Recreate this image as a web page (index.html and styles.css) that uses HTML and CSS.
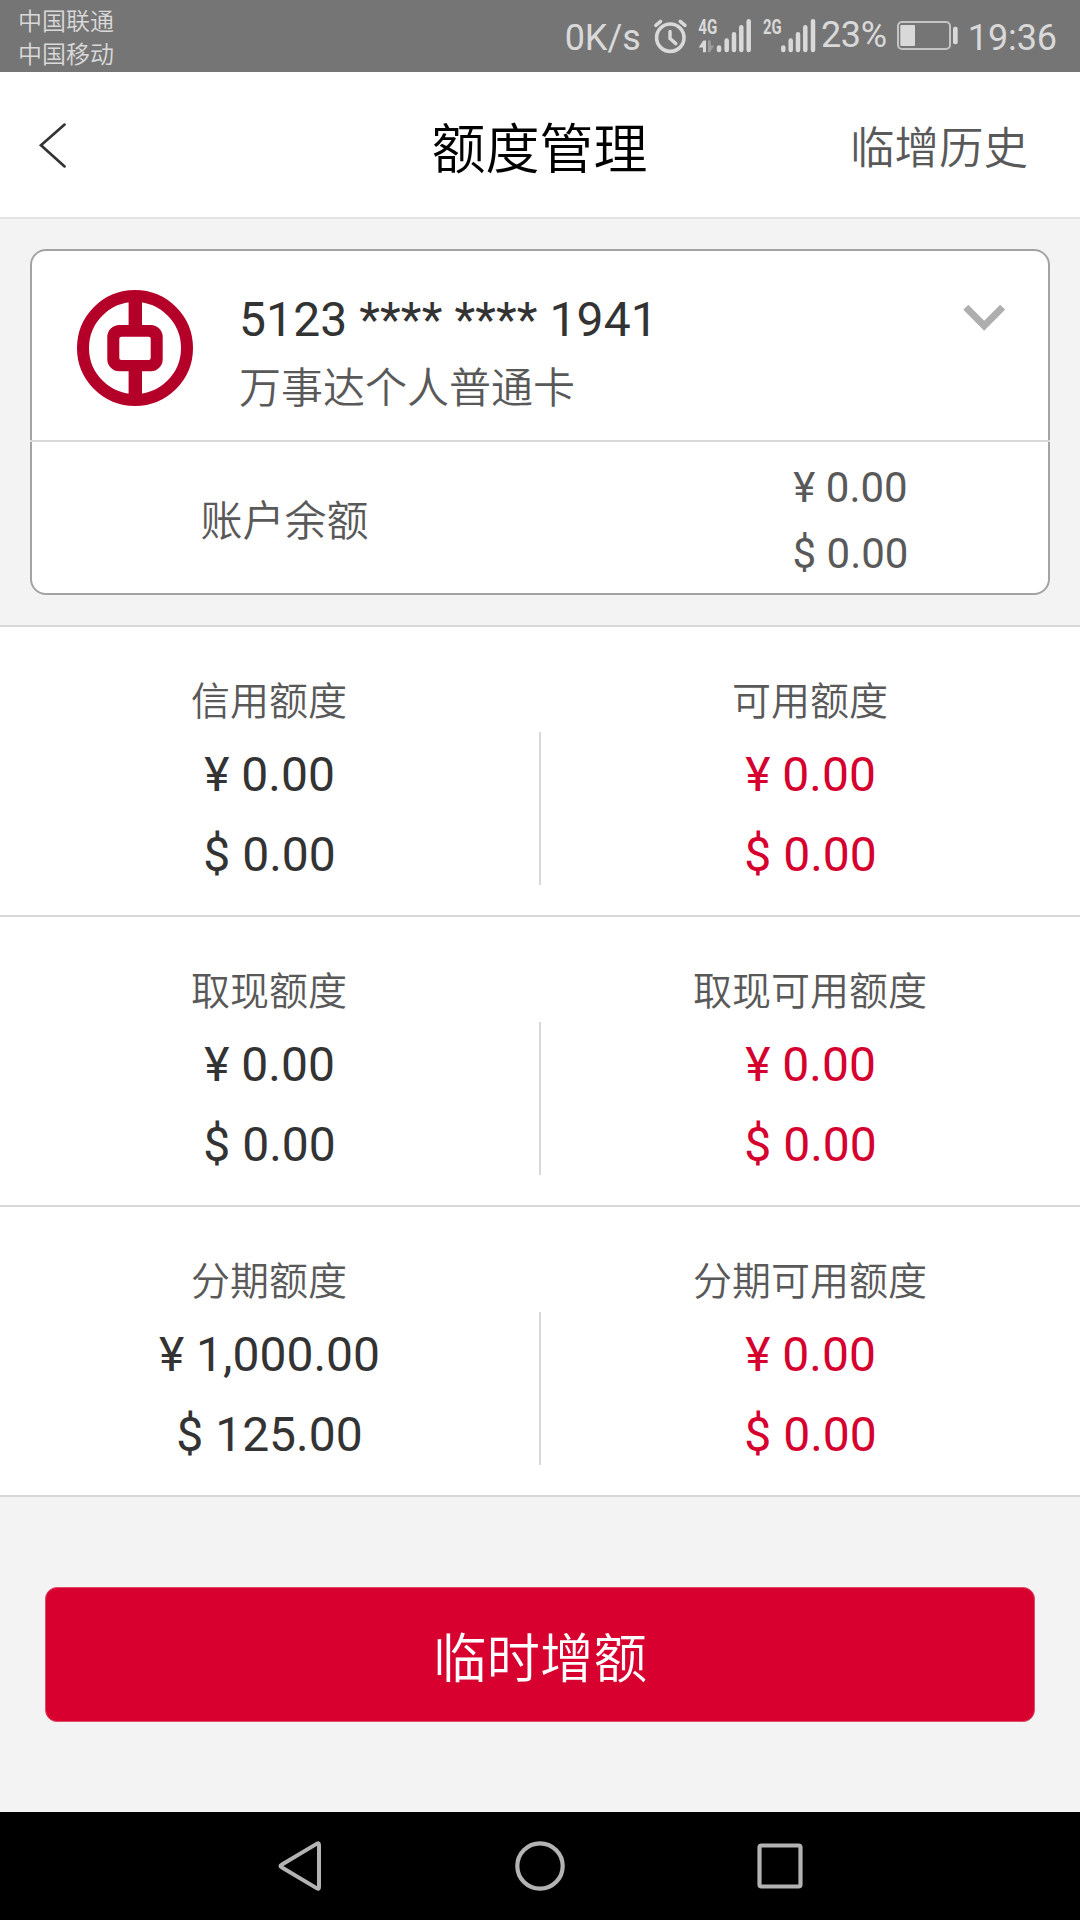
FILE: index.html
```
<!DOCTYPE html>
<html lang="zh-CN">
<head>
<meta charset="utf-8">
<title>额度管理</title>
<link rel="stylesheet" href="styles.css">
</head>
<body>
<div class="status">
  <div class="carriers"><div>中国联通</div><div>中国移动</div></div>
  <div class="status-right">
    <span class="speed">0K/s</span>
    <svg class="signals" width="166" height="72" viewBox="650 0 166 72">
      <g fill="none" stroke="#d9d9d9" stroke-linecap="round">
        <circle cx="669.3" cy="37.7" r="13.7" stroke-width="3.6"/>
        <path d="M669 31.5V38.5L674.8 43.6" stroke-width="3.4" stroke-linejoin="round"/>
        <path d="M654.8 25.4L659.6 21.4M679.2 21.4L684 25.4" stroke-width="3.4"/>
        <g stroke-width="4.5">
          <path d="M718 47.5V50.1M725.7 40.5V50.1M733 34.2V50.1M740.3 27.2V50.1M747.7 21.2V50.1"/>
          <path d="M782.3 47.5V50.1M789.7 40.5V50.1M797 34.2V50.1M804.3 27.2V50.1M812 21.2V50.1"/>
        </g>
      </g>
      <text class="net" x="697.3" y="34" textLength="19" lengthAdjust="spacingAndGlyphs">4G</text>
      <text class="net" x="762" y="34" textLength="18.6" lengthAdjust="spacingAndGlyphs">2G</text>
      <path d="M702.3 40.5H705V52.3H702V47.5H697.6Z" fill="#d9d9d9"/>
      <path d="M707 40.5H709.8V45.5H713.3L709 52.3H707Z" fill="#9c9c9c"/>
    </svg>
    <span class="percent">23%</span>
    <svg class="battery" width="62" height="72" viewBox="895 0 62 72">
      <rect x="897" y="22" width="52" height="27" rx="4" fill="none" stroke="#c4c4c4" stroke-width="2"/>
      <rect x="899.3" y="25" width="14.7" height="21" rx="1" fill="#d9d9d9"/>
      <rect x="952" y="26.7" width="4.7" height="17.6" rx="2" fill="#d9d9d9"/>
    </svg>
    <span class="time">19:36</span>
  </div>
</div>

<header class="header">
  <svg width="30" height="48" viewBox="38 121 30 48"><path d="M64.6 124.6L41 145.2L64.6 166.4" fill="none" stroke="#333" stroke-width="2.7" stroke-linecap="round"/></svg>
  <h1 class="title">额度管理</h1>
  <a class="history">临增历史</a>
</header>

<section class="card-area">
  <div class="card">
    <div class="card-top">
      <svg class="logo" width="116" height="116" viewBox="77 290 116 116">
        <circle cx="135" cy="348" r="52" fill="none" stroke="#b40029" stroke-width="12"/>
        <path d="M135.3 296V331M135.3 366V400" stroke="#b40029" stroke-width="13.4"/>
        <path fill="#b40029" fill-rule="evenodd" d="M119.3 325H150.7A12 12 0 0 1 162.7 337V359.3A12 12 0 0 1 150.7 371.3H119.3A12 12 0 0 1 107.3 359.3V337A12 12 0 0 1 119.3 325ZM121.3 336.7A2 2 0 0 0 119.3 338.7V358A2 2 0 0 0 121.3 360H148.7A2 2 0 0 0 150.7 358V338.7A2 2 0 0 0 148.7 336.7Z"/>
      </svg>
      <div class="card-text">
        <div class="card-number">5123 **** **** 1941</div>
        <div class="card-name">万事达个人普通卡</div>
      </div>
      <svg class="chevron" width="42" height="27" viewBox="963 304 42 27"><path d="M965.8 307.2L984.2 325.7L1002.6 307.2" fill="none" stroke="#aeaeae" stroke-width="7"/></svg>
    </div>
    <div class="card-balance">
      <div class="balance-label">账户余额</div>
      <div class="balance-values"><div>¥ 0.00</div><div>$ 0.00</div></div>
    </div>
  </div>
</section>

<main class="limits">
  <div class="row">
    <div class="cell"><div class="label">信用额度</div><div class="amount">¥ 0.00</div><div class="amount">$ 0.00</div></div>
    <div class="rule"></div>
    <div class="cell available"><div class="label">可用额度</div><div class="amount">¥ 0.00</div><div class="amount">$ 0.00</div></div>
  </div>
  <div class="row">
    <div class="cell"><div class="label">取现额度</div><div class="amount">¥ 0.00</div><div class="amount">$ 0.00</div></div>
    <div class="rule"></div>
    <div class="cell available"><div class="label">取现可用额度</div><div class="amount">¥ 0.00</div><div class="amount">$ 0.00</div></div>
  </div>
  <div class="row">
    <div class="cell"><div class="label">分期额度</div><div class="amount">¥ 1,000.00</div><div class="amount">$ 125.00</div></div>
    <div class="rule"></div>
    <div class="cell available"><div class="label">分期可用额度</div><div class="amount">¥ 0.00</div><div class="amount">$ 0.00</div></div>
  </div>
</main>

<div class="action"><button class="raise">临时增额</button></div>

<nav class="nav">
  <svg width="60" height="60" viewBox="270 1836 60 60"><path d="M317 1843.6Q319 1842.4 319 1845V1887Q319 1889.6 317 1888.4L281.6 1867.2Q279.4 1866 281.6 1864.8Z" fill="none" stroke="#b3b3b3" stroke-width="4"/></svg>
  <svg width="60" height="60" viewBox="510 1836 60 60"><circle cx="540" cy="1866" r="22.7" fill="none" stroke="#b3b3b3" stroke-width="4.2"/></svg>
  <svg width="60" height="60" viewBox="750 1836 60 60"><rect x="759.5" y="1845.5" width="41" height="41" rx="2" fill="none" stroke="#b3b3b3" stroke-width="4.2"/></svg>
</nav>
</body>
</html>
```
FILE: styles.css
```
* { box-sizing: border-box; }
body {
  margin: 0;
  width: 1080px;
  height: 1920px;
  display: flex;
  flex-direction: column;
  background: #f3f3f3;
  font-family: Roboto, "Noto Sans CJK SC", sans-serif;
  font-weight: 400;
  color: #333;
  overflow: hidden;
}
svg { display: block; flex: none; }

.carriers, .title, .history, .card-name, .balance-label, .label, .raise {
  font-family: "Noto Sans CJK SC DemiLight", "Noto Sans CJK SC", sans-serif;
  font-weight: 350;
}

.status {
  height: 72px;
  flex: none;
  display: flex;
  justify-content: space-between;
  background: #757575;
  color: #d9d9d9;
  padding: 0 23px 0 18px;
}
.carriers { font-size: 24px; line-height: 33px; padding-top: 3px; }
.status-right { display: flex; font-size: 36px; line-height: 77px; white-space: nowrap; }
.signals { margin-left: 10px; }
.percent { margin-left: 4px; line-height: 70px; letter-spacing: -0.3px; }
.battery { margin-left: 9px; }
.time { margin-left: 10px; letter-spacing: -0.1px; }
.net { font-size: 20px; font-weight: 700; fill: #d9d9d9; }

.header {
  height: 147px;
  flex: none;
  display: grid;
  grid-template-columns: 1fr auto 1fr;
  align-items: center;
  background: #fff;
  border-bottom: 2px solid #e4e4e4;
  padding: 0 52px 0 38px;
}
.title { margin: 0; font-size: 54px; line-height: 80px; color: #000; padding: 2px 0 0 13px; }
.history { font-size: 44.5px; line-height: 80px; color: #595959; justify-self: end; }

.card-area { padding: 30px 30px 30px; flex: none; }
.card {
  height: 346px;
  background: #fff;
  border: 2px solid #a3a3a3;
  border-radius: 16px;
}
.card-top {
  height: 189px;
  display: flex;
  align-items: flex-start;
  padding: 35px 43px 0 45px;
}
.logo { margin-top: 4px; }
.card-text { flex: 1; padding-left: 46px; }
.card-number { font-size: 48px; line-height: 68px; letter-spacing: 0.1px; }
.card-name { font-size: 42px; line-height: 62px; color: #595959; }
.chevron { margin-top: 18px; }
.card-balance {
  height: 153px;
  margin: 0 -2px;
  padding: 0 2px;
  border-top: 2px solid #d8d8d8;
  display: grid;
  grid-template-columns: 1fr 1fr;
  font-size: 42px;
  color: #595959;
  text-align: center;
}
.balance-label { line-height: 66px; padding: 43px 3px 0 0; }
.balance-values { line-height: 66px; padding: 13px 0 0 113px; }

.limits { flex: none; background: #fff; border-top: 2px solid #d8d8d8; }
.row {
  height: 290px;
  display: grid;
  grid-template-columns: 1fr 2px 1fr;
  border-bottom: 2px solid #d8d8d8;
  text-align: center;
}
.cell { padding-top: 43px; }
.label { font-size: 39px; line-height: 56px; margin-bottom: 9px; color: #595959; padding-right: 1px; }
.amount { font-size: 48px; line-height: 80px; }
.available .amount { color: #d6002f; }
.rule { height: 153px; margin-top: 105px; background: #d8d8d8; }

.action { flex: 1; padding: 90px 45px 0; }
.raise {
  display: block;
  width: 100%;
  height: 135px;
  padding: 0;
  border: 1px solid #dd4a6b;
  border-radius: 12px;
  background: #d8002f;
  color: #fff;
  font-size: 53.5px;
  line-height: 131px;
}

.nav {
  height: 108px;
  flex: none;
  background: #000;
  display: flex;
  justify-content: center;
  align-items: center;
  gap: 180px;
}
```
